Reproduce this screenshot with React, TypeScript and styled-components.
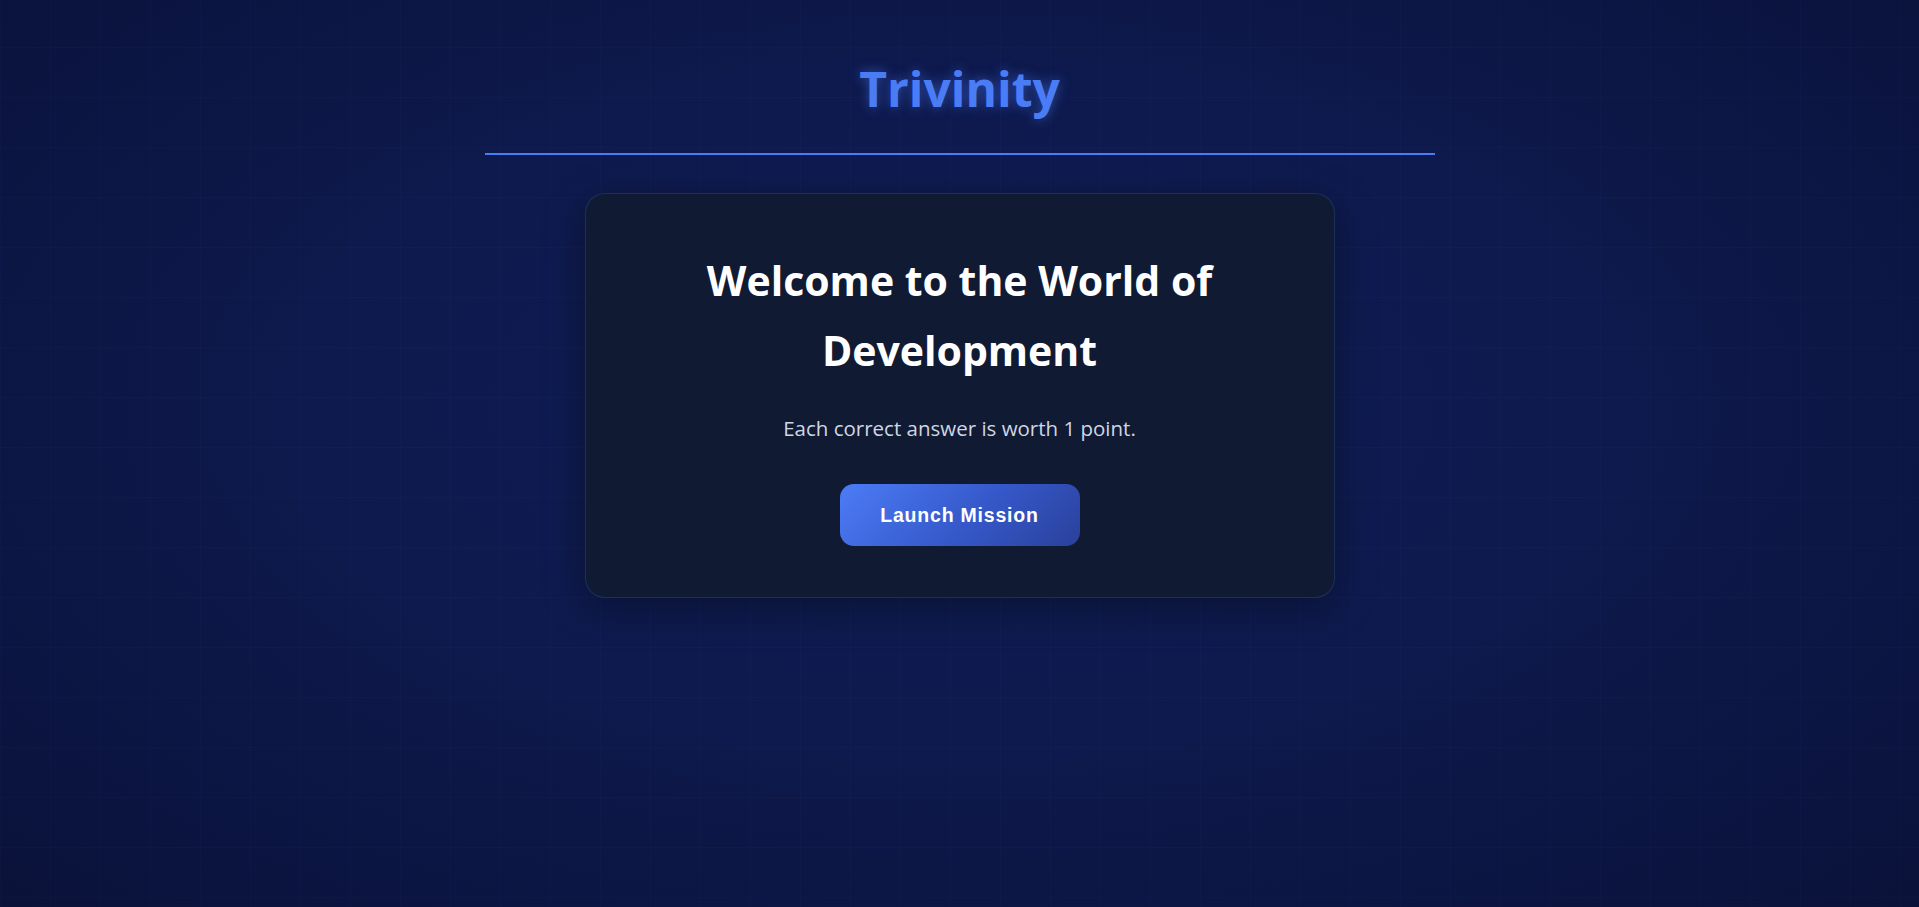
import React from "react";
import styled, { createGlobalStyle } from "styled-components";

const GlobalStyle = createGlobalStyle`
  html, body {
    margin: 0;
    padding: 0;
    min-height: 100%;
  }
  body {
    font-family: "Open Sans", "Noto Sans", sans-serif;
    color: #ffffff;
    background-color: #0c1545;
  }
`;

const Page = styled.div`
  min-height: 907px;
  box-sizing: border-box;
  display: flex;
  flex-direction: column;
  align-items: center;
  padding-top: 52px;
  background-color: #0e1a4e;
  background-image:
    linear-gradient(rgba(74, 123, 247, 0.03) 1px, transparent 1px),
    linear-gradient(90deg, rgba(74, 123, 247, 0.03) 1px, transparent 1px),
    radial-gradient(ellipse at 50% 45%, #101d54 0%, #0e1a4e 45%, #0a1239 100%);
  background-size: 50px 50px, 50px 50px, 100% 100%;
  background-position: 0 -3px, 0 0, 0 0;
`;

const Header = styled.header`
  width: 950px;
  display: flex;
  flex-direction: column;
  align-items: center;
  border-bottom: 2px solid #4a7bf7;
  padding-bottom: 27px;
`;

const Title = styled.h1`
  margin: 0;
  font-family: "Open Sans", "Noto Sans", sans-serif;
  font-weight: 700;
  font-size: 48px;
  line-height: 74px;
  color: #4a7cf6;
  text-shadow: 0 0 12px rgba(74, 124, 247, 0.55);
`;

const Card = styled.section`
  margin-top: 38px;
  width: 750px;
  box-sizing: border-box;
  padding: 51px 48px 51px;
  background: #111a33;
  border: 1px solid rgba(74, 123, 247, 0.22);
  border-radius: 20px;
  box-shadow: 0 10px 40px rgba(0, 0, 0, 0.35);
  display: flex;
  flex-direction: column;
  align-items: center;
  text-align: center;
`;

const Heading = styled.h2`
  margin: 0;
  width: 560px;
  font-family: "Open Sans", "Noto Sans", sans-serif;
  font-weight: 700;
  font-size: 41px;
  line-height: 70px;
  color: #ffffff;
`;

const Lead = styled.p`
  margin: 29px 0 0;
  font-family: "Open Sans", "Noto Sans", sans-serif;
  font-size: 20.5px;
  line-height: 28px;
  color: #cfd6e4;
`;

const LaunchButton = styled.button`
  margin-top: 42px;
  width: 240px;
  height: 62px;
  border: none;
  border-radius: 14px;
  background: linear-gradient(135deg, #4c7cf7 0%, #3558c9 55%, #2a419b 100%);
  color: #ffffff;
  font-family: "Liberation Sans", Arial, sans-serif;
  font-weight: 700;
  font-size: 19.5px;
  letter-spacing: 0.8px;
  cursor: pointer;
`;

export default function App() {
  return (
    <>
      <GlobalStyle />
      <Page>
        <Header>
          <Title>Trivinity</Title>
        </Header>
        <Card>
          <Heading>Welcome to the World of Development</Heading>
          <Lead>Each correct answer is worth 1 point.</Lead>
          <LaunchButton>Launch Mission</LaunchButton>
        </Card>
      </Page>
    </>
  );
}
